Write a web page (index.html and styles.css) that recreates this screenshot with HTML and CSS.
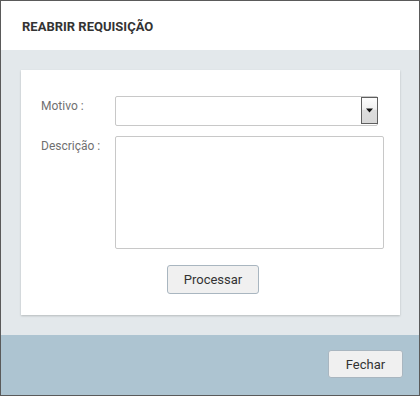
FILE: index.html
```html
<!DOCTYPE html>
<html lang="pt">
<head>
<meta charset="utf-8">
<title>Reabrir Requisição</title>
<link rel="stylesheet" href="styles.css">
</head>
<body>
<div class="dialog">
  <div class="header"><h1 class="title">REABRIR REQUISIÇÃO</h1></div>
  <div class="content">
    <div class="card">
      <div class="row">
        <label class="label">Motivo :</label>
        <div class="select">
          <span class="select-btn">
            <svg width="7" height="5" viewBox="0 0 7 5"><path d="M0 0.5H7L3.5 4.5Z" fill="#111"/></svg>
          </span>
        </div>
      </div>
      <div class="row row-desc">
        <label class="label">Descrição :</label>
        <div class="textarea"></div>
      </div>
      <div class="actions">
        <button class="btn btn-process">Processar</button>
      </div>
    </div>
  </div>
  <div class="footer">
    <button class="btn btn-close">Fechar</button>
  </div>
</div>
</body>
</html>
```
FILE: styles.css
```css
* { box-sizing: border-box; }
html, body { margin: 0; padding: 0; }
body { font-family: Roboto, "Noto Sans", sans-serif; width: 420px; height: 396px; }
.dialog {
  width: 420px; height: 396px;
  border: 1px solid #5a5a5a;
  display: flex; flex-direction: column;
  background: #e3e8eb;
}
.header {
  height: 49px; background: #fff;
  display: flex; align-items: center;
  padding-left: 21px;
}
.title {
  margin: 0; font-size: 13px; font-weight: 700; color: #333;
  padding-top: 1px;
}
.content {
  height: 285px; padding: 20px 19px 20px 20px;
}
.card {
  background: #fff; height: 245px;
  box-shadow: 0 1px 2px rgba(0,0,0,0.2);
  padding: 26px 15px 0 20px;
}
.row { display: flex; align-items: flex-start; }
.row-desc { margin-top: 10px; }
.label {
  width: 74px; font-size: 12px; color: #707070;
  padding-top: 3px; line-height: 14px;
}
.select {
  width: 263px; height: 30px;
  border: 1px solid #c8c8c8; border-radius: 2px;
  position: relative; background: #fff;
}
.select-btn {
  position: absolute; right: -1px; top: 0; bottom: 1px; width: 17px;
  border: 1px solid #5f5f5f;
  background: linear-gradient(#fdfdfd 0%, #f0f0f0 45%, #dcdcdc 50%, #d8d8d8 100%);
  display: flex; align-items: center; justify-content: center;
}
.select-btn svg { display: block; }
.textarea {
  width: 269px; height: 113px;
  border: 1px solid #c8c8c8; border-radius: 2px; background: #fff;
}
.actions { display: flex; justify-content: center; margin-top: 16px; }
.btn {
  font-family: Roboto, "Noto Sans", sans-serif;
  font-size: 13px; color: #333;
  background: #f0f0f0; border: 1px solid #a9b6c0; border-radius: 3px;
  padding: 0; cursor: pointer;
}
.btn-process { width: 92px; height: 29px; }
.footer {
  height: 60px; background: #adc4d1;
  display: flex; justify-content: flex-end; align-items: flex-start;
  padding: 15px 16px 0 0;
}
.btn-close { width: 75px; height: 28px; }
```
